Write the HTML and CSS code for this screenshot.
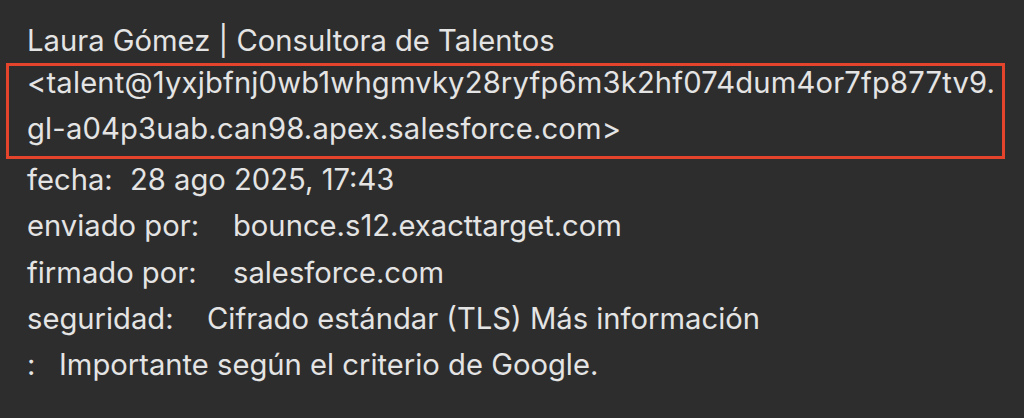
FILE: index.html
```html
<!DOCTYPE html>
<html lang="es">
<head>
<meta charset="utf-8">
<link rel="stylesheet" href="styles.css">
</head>
<body>
<div class="details">
  <div class="line">Laura Gómez | Consultora de Talentos</div>
  <div class="addr">
    <div class="line first">&lt;talent@1yxjbfnj0wb1whgmvky28ryfp6m3k2hf074dum4or7fp877tv9.</div>
    <div class="line">gl-a04p3uab.can98.apex.salesforce.com&gt;</div>
  </div>
  <div class="line after"><span class="k k-fecha">fecha:</span><span class="v">28 ago 2025, 17:43</span></div>
  <div class="line"><span class="k k-por">enviado por:</span><span class="v">bounce.s12.exacttarget.com</span></div>
  <div class="line"><span class="k k-por">firmado por:</span><span class="v">salesforce.com</span></div>
  <div class="line"><span class="k k-seg">seguridad:</span><span class="v">Cifrado estándar (TLS) Más información</span></div>
  <div class="line"><span class="k k-imp">:</span><span class="v">Importante según el criterio de Google.</span></div>
</div>
</body>
</html>
```

FILE: styles.css
```css
html, body {
  margin: 0;
  padding: 0;
  background: #2d2d2d;
}
body {
  width: 1024px;
  height: 418px;
  overflow: hidden;
  font-family: Inter, "Liberation Sans", sans-serif;
  color: #e4e4e4;
  font-size: 29.2px;
}
.details {
  padding: 18px 0 0 27px;
}
.line {
  height: 46.2px;
  line-height: 46.2px;
  white-space: nowrap;
}
.addr {
  margin: -1.4px 0 0 -21px;
  width: 999px;
  height: 96px;
  padding-left: 18px;
  border: 3px solid #e4432c;
  box-sizing: border-box;
  letter-spacing: 0.17px;
}
.addr .first {
  margin-top: -5.6px;
}
.after {
  margin-top: -1.6px;
}
.k {
  display: inline-block;
}
.k-fecha { width: 103px; }
.k-por { width: 206px; }
.k-seg { width: 180px; }
.k-imp { width: 32px; }
```
